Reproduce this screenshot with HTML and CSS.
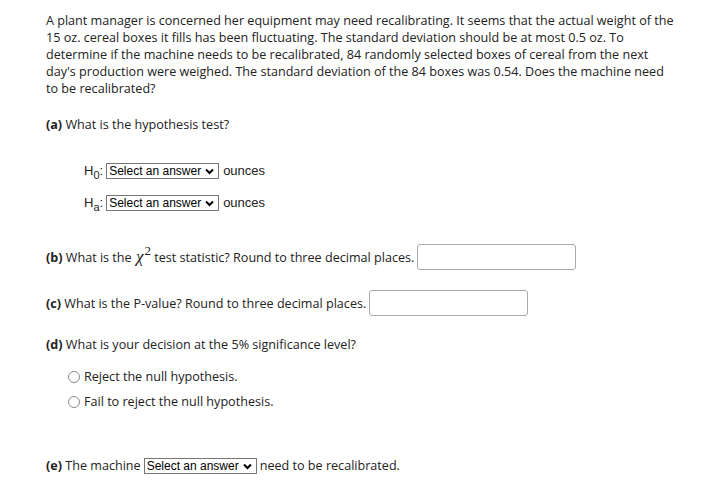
FILE: index.html
```html
<!DOCTYPE html>
<html>
<head>
<meta charset="utf-8">
<link rel="stylesheet" href="styles.css">
</head>
<body>
<div class="page">
  <p class="intro">A plant manager is concerned her equipment may need recalibrating. It seems that the actual weight of the 15 oz. cereal boxes it fills has been fluctuating. The standard deviation should be at most 0.5 oz. To determine if the machine needs to be recalibrated, 84 randomly selected boxes of cereal from the next day's production were weighed. The standard deviation of the 84 boxes was 0.54. Does the machine need to be recalibrated?</p>

  <p class="q qa"><b>(a)</b> What is the hypothesis test?</p>

  <div class="hrow h0">
    <span class="hlabel">H<sub>0</sub>:</span>
    <span class="sel"><select><option>Select an answer</option></select><svg class="chev" width="9" height="7" viewBox="0 0 9 7"><path d="M1 1.5 L4.5 5 L8 1.5" fill="none" stroke="#000" stroke-width="2"/></svg></span>
    <span class="unit">ounces</span>
  </div>
  <div class="hrow ha">
    <span class="hlabel">H<sub>a</sub>:</span>
    <span class="sel"><select><option>Select an answer</option></select><svg class="chev" width="9" height="7" viewBox="0 0 9 7"><path d="M1 1.5 L4.5 5 L8 1.5" fill="none" stroke="#000" stroke-width="2"/></svg></span>
    <span class="unit">ounces</span>
  </div>

  <div class="irow ib">
    <span><b>(b)</b> What is the <span class="chi">χ<sup>2</sup></span> test statistic? Round to three decimal places.</span>
    <input class="txt" type="text">
  </div>
  <div class="irow ic">
    <span><b>(c)</b> What is the P-value? Round to three decimal places.</span>
    <input class="txt" type="text">
  </div>

  <p class="q qd"><b>(d)</b> What is your decision at the 5% significance level?</p>
  <div class="radio r1"><span class="dot"></span>Reject the null hypothesis.</div>
  <div class="radio r2"><span class="dot"></span>Fail to reject the null hypothesis.</div>

  <div class="erow">
    <span><b>(e)</b> The machine</span>
    <span class="sel"><select><option>Select an answer</option></select><svg class="chev" width="9" height="7" viewBox="0 0 9 7"><path d="M1 1.5 L4.5 5 L8 1.5" fill="none" stroke="#000" stroke-width="2"/></svg></span>
    <span>need to be recalibrated.</span>
  </div>
</div>
</body>
</html>
```

FILE: styles.css
```css
html, body {
  margin: 0;
  padding: 0;
  background: #fff;
}
.page {
  font-family: "Open Sans", "Liberation Sans", sans-serif;
  font-size: 12.6px;
  line-height: 17px;
  color: #222;
  padding: 12px 20px 0 46px;
  width: 632px;
}
p { margin: 0; }
b { font-weight: 700; }
.qa { margin-top: 19px; }

.hrow {
  display: flex;
  align-items: center;
  height: 17px;
  margin-left: 38px;
  font-family: "Liberation Sans", Arial, sans-serif;
  font-size: 13px;
}
.h0 { margin-top: 29px; }
.ha { margin-top: 15px; }
.hlabel { margin-right: 3px; }
.hlabel sub {
  font-size: 11px;
  line-height: 0;
  vertical-align: -4px;
}
.unit { margin-left: 4px; }

.sel {
  position: relative;
  display: inline-block;
  height: 16px;
}
.sel select {
  appearance: none;
  -webkit-appearance: none;
  box-sizing: border-box;
  width: 113px;
  height: 16px;
  margin: 0;
  padding: 0 0 0 2px;
  border: 1px solid #767676;
  border-radius: 0;
  background: #fff;
  color: #000;
  font-family: "Liberation Sans", Arial, sans-serif;
  font-size: 12px;
  line-height: 14px;
  display: block;
}
.chev {
  position: absolute;
  right: 5px;
  top: 5px;
  pointer-events: none;
}

.irow {
  display: flex;
  align-items: center;
  height: 26px;
}
.ib { margin-top: 33px; }
.ic { margin-top: 20px; }
.txt {
  box-sizing: border-box;
  width: 159px;
  height: 26px;
  margin: 0 0 0 3px;
  border: 1px solid #a9a9a9;
  border-radius: 3px;
  background: #fff;
}
.chi {
  font-family: "Liberation Serif", "Times New Roman", serif;
  font-style: italic;
  font-size: 17px;
  line-height: 0;
  margin-left: 1px;
}
.chi sup {
  font-style: normal;
  font-size: 13px;
  line-height: 0;
  vertical-align: 7px;
  margin-left: 1px;
}

.qd { margin-top: 20px; }
.radio {
  display: flex;
  align-items: center;
  height: 17px;
  margin-left: 22px;
}
.r1 { margin-top: 15px; }
.r2 { margin-top: 8px; }
.dot {
  box-sizing: border-box;
  width: 12px;
  height: 12px;
  border: 1px solid #8a8a8a;
  border-radius: 50%;
  margin-right: 4px;
}

.erow {
  display: flex;
  align-items: center;
  height: 17px;
  margin-top: 47px;
  gap: 3px;
}
```
